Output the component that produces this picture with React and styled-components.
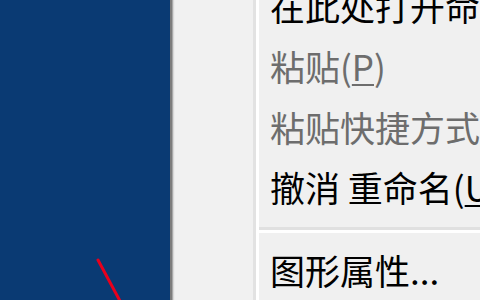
import React from "react";
import styled, { createGlobalStyle } from "styled-components";

const GlobalStyle = createGlobalStyle`
  html, body {
    margin: 0;
    padding: 0;
    width: 480px;
    height: 300px;
    overflow: hidden;
    background: #f0f0f0;
  }
`;

const Screen = styled.div`
  display: flex;
  width: 480px;
  height: 300px;
  overflow: hidden;
`;

const Desktop = styled.div`
  position: relative;
  flex: 0 0 170px;
  background: #0a3a73;
`;

const Pointer = styled.svg`
  position: absolute;
  left: 90px;
  top: 255px;
`;

const MenuEdge = styled.div`
  flex: 0 0 5px;
  background: linear-gradient(
    to right,
    #7d7d7d 0,
    #7d7d7d 2px,
    #a8a8a8 2px,
    #a8a8a8 3px,
    #d8d8d8 3px,
    #d8d8d8 4px,
    #ececec 4px
  );
`;

const Menu = styled.div`
  flex: 1;
  display: flex;
  min-width: 0;
  background: #f0f0f0;
`;

const Gutter = styled.div`
  flex: 0 0 78px;
  background: #f1f1f1;
  border-right: 3px solid #e2e2e2;
  box-shadow: 3px 0 0 #ffffff;
  margin-right: 3px;
`;

const Items = styled.div`
  flex: 1;
  display: flex;
  flex-direction: column;
  margin-top: -24.5px;
  min-width: 0;
`;

const Item = styled.div`
  height: 63px;
  display: flex;
  align-items: center;
  padding-left: 11px;
  white-space: nowrap;
  font-family: "Noto Sans CJK SC", "Noto Sans", sans-serif;
  font-size: 35px;
  color: ${({ disabled }) => (disabled ? "#6d6d6d" : "#000000")};
  u {
    text-decoration-thickness: 2px;
    text-underline-offset: 3px;
  }
`;

const Separator = styled.div`
  height: 24px;
  display: flex;
  align-items: center;
  &::before {
    content: "";
    display: block;
    width: 100%;
    height: 3px;
    background: #e0e0e0;
    border-bottom: 3px solid #ffffff;
    margin-top: 3px;
  }
`;

const App = () => (
  <>
    <GlobalStyle />
    <Screen>
      <Desktop>
        <Pointer width="40" height="50" viewBox="0 0 40 50">
          <line
            x1="8"
            y1="5"
            x2="30"
            y2="46"
            stroke="#e8001c"
            strokeWidth="3"
            strokeLinecap="round"
          />
        </Pointer>
      </Desktop>
      <MenuEdge />
      <Menu>
        <Gutter />
        <Items>
          <Item>
            在此处打开命令窗口(<u>W</u>)
          </Item>
          <Item disabled>
            粘贴(<u>P</u>)
          </Item>
          <Item disabled>
            粘贴快捷方式(<u>S</u>)
          </Item>
          <Item>
            撤消 重命名(<u>U</u>)
          </Item>
          <Separator />
          <Item>图形属性...</Item>
        </Items>
      </Menu>
    </Screen>
  </>
);

export default App;
